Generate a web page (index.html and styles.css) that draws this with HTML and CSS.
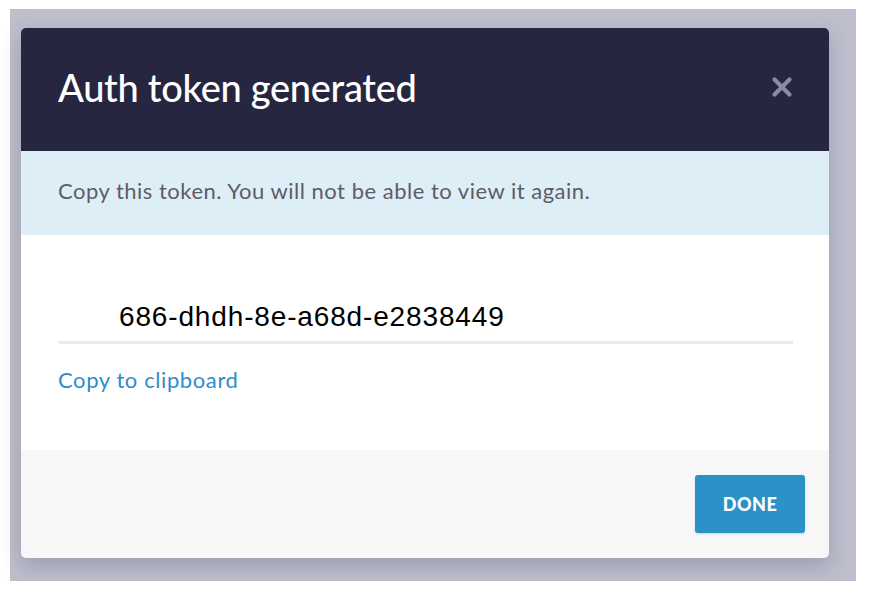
FILE: index.html
```html
<!DOCTYPE html>
<html>
<head>
<meta charset="utf-8">
<link rel="stylesheet" href="styles.css">
</head>
<body>
<div class="overlay">
  <div class="modal">
    <div class="modal-header">
      <h1 class="title">Auth token generated</h1>
      <button class="close" aria-label="Close">
        <svg width="22" height="22" viewBox="0 0 22 22"><path d="M3.5 3.5 L18.5 18.5 M18.5 3.5 L3.5 18.5" stroke="#8b8aa1" stroke-width="4.2" stroke-linecap="round"/></svg>
      </button>
    </div>
    <div class="notice">Copy this token. You will not be able to view it again.</div>
    <div class="modal-body">
      <div class="token">686-dhdh-8e-a68d-e2838449</div>
      <a class="copy-link" href="#">Copy to clipboard</a>
    </div>
    <div class="modal-footer">
      <button class="done">DONE</button>
    </div>
  </div>
</div>
</body>
</html>
```
FILE: styles.css
```css
html, body {
  margin: 0;
  padding: 0;
  background: #ffffff;
}
body {
  font-family: Lato, "Noto Sans", sans-serif;
}
.overlay {
  margin: 9px 22px 0 10px;
  width: 846px;
  height: 572px;
  background: #bdbfcd;
  padding: 19px 27px 0 11px;
  box-sizing: border-box;
}
.modal {
  width: 808px;
  height: 530px;
  border-radius: 5px;
  overflow: hidden;
  display: flex;
  flex-direction: column;
  box-shadow: 0 8px 20px rgba(60, 60, 85, 0.25);
}
.modal-header {
  height: 123px;
  background: #262641;
  display: flex;
  align-items: center;
  justify-content: space-between;
  padding: 0 36px 0 37px;
  box-sizing: border-box;
}
.title {
  margin: 0;
  color: #ffffff;
  font-size: 38px;
  font-weight: 500;
  letter-spacing: -0.3px;
  position: relative;
  top: -3px;
}
.close {
  background: none;
  border: 0;
  padding: 0;
  display: flex;
  position: relative;
  top: -3px;
}
.notice {
  height: 84px;
  background: #ddeef6;
  color: #5d5c68;
  font-size: 22px;
  letter-spacing: 0.5px;
  display: flex;
  align-items: center;
  padding-left: 37px;
  padding-bottom: 6px;
  box-sizing: border-box;
}
.modal-body {
  height: 215px;
  background: #ffffff;
  padding: 60px 36px 0 37px;
  box-sizing: border-box;
}
.token {
  font-family: "Liberation Sans", Arial, sans-serif;
  font-size: 28px;
  letter-spacing: 0.85px;
  color: #000000;
  padding-left: 61px;
  height: 46px;
  line-height: 44px;
  border-bottom: 3px solid #ebebeb;
}
.copy-link {
  display: inline-block;
  margin-top: 22px;
  color: #2f8ccc;
  font-size: 22px;
  letter-spacing: 0.6px;
  text-decoration: none;
}
.modal-footer {
  flex: 1;
  background: #f7f7f7;
  display: flex;
  justify-content: flex-end;
  align-items: flex-start;
  padding: 25px 24px 0 0;
  box-sizing: border-box;
}
.done {
  width: 110px;
  height: 58px;
  background: #2a92c9;
  color: #ffffff;
  border: 0;
  border-radius: 3px;
  font-family: Lato, "Noto Sans", sans-serif;
  font-weight: 900;
  font-size: 18px;
  letter-spacing: 0.5px;
  box-shadow: 0 1px 2px rgba(0,0,0,0.15);
}
```
